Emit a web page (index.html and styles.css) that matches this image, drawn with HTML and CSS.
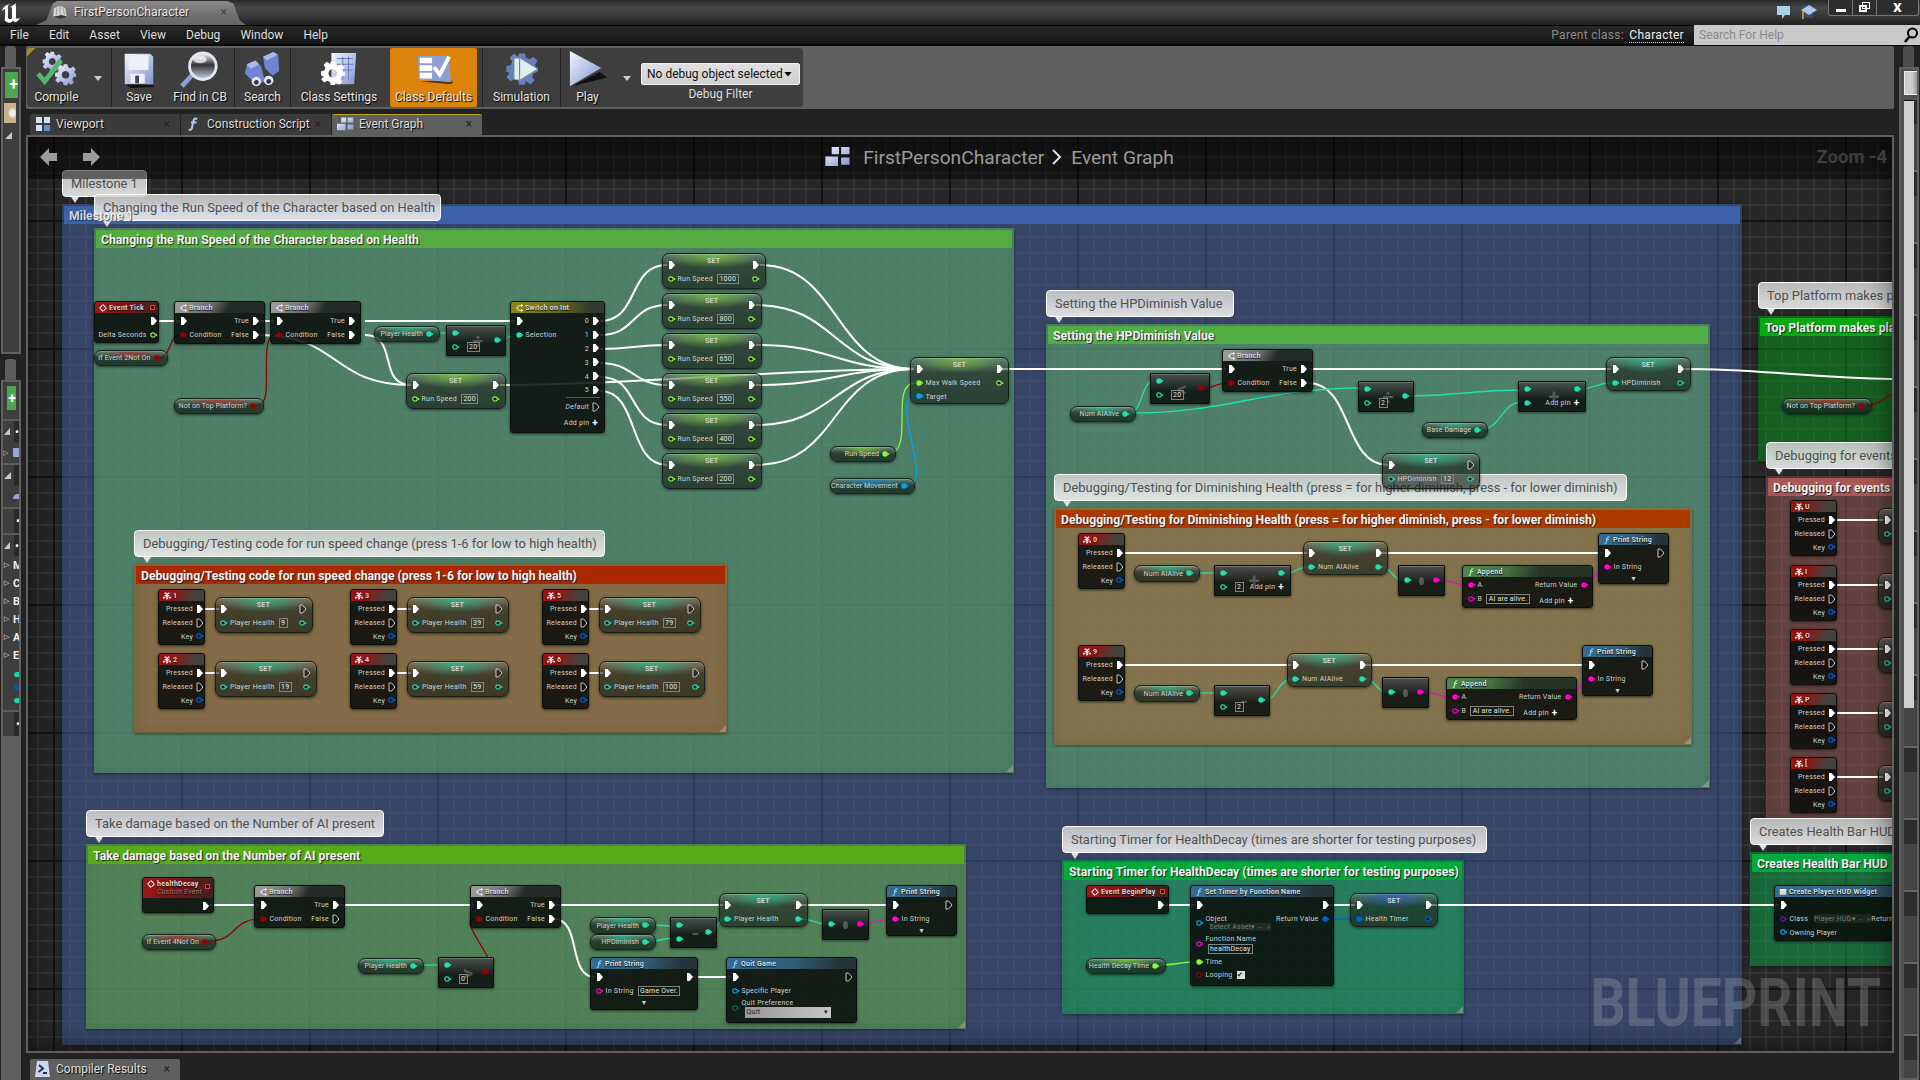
FILE: index.html
```html
<!DOCTYPE html>
<html lang="en">
<head>
<meta charset="utf-8">
<title>FirstPersonCharacter</title>
<link rel="stylesheet" href="styles.css">
</head>
<body>
<svg width="0" height="0" class="defs">
  <defs>
    <linearGradient id="steel" x1="0" y1="0" x2="1" y2="1"><stop offset="0" stop-color="#f4f7ff"/><stop offset="1" stop-color="#7f93cf"/></linearGradient>
    <linearGradient id="lens" x1="0" y1="0" x2="0" y2="1"><stop offset="0" stop-color="#fff"/><stop offset=".45" stop-color="#333"/><stop offset="1" stop-color="#cfd6e8"/></linearGradient>
    <symbol id="gear" viewBox="-12 -12 24 24"><path fill-rule="evenodd" d="M-2-11h4l.7 3 2.6 1.1 2.7-1.7 2.8 2.8-1.7 2.7L10.200-.5l1-1.500v4l-3 .7-1.100 2.600 1.700 2.700-2.800 2.800-2.700-1.700L2.700 8.200 2 11h-4l-.7-3-2.600-1.100-2.700 1.700-2.800-2.800 1.700-2.700L-8.200 2.700-11 2v-4l3-.7 1.100-2.600-1.700-2.700 2.800-2.800 2.700 1.700L-2.700-8.200zM0-4a4 4 0 1 0 .01 0z"/></symbol>
    <symbol id="ex" viewBox="0 0 9 10"><path d="M2 1h2.500L8 5 4.500 9H2z"/></symbol>
    <symbol id="dot" viewBox="0 0 9 10"><circle cx="4" cy="5" r="2.700"/><path d="M6.300 3.300 8.600 5 6.300 6.700z"/></symbol>
    <symbol id="ring" viewBox="0 0 9 10"><circle cx="4" cy="5" r="2.200" fill="#0a1210" stroke="currentColor" stroke-width="1.200"/><path d="M6.700 3.600 8.700 5 6.700 6.400z"/></symbol>
    <symbol id="event" viewBox="0 0 10 10"><path d="M5 .8 9.200 5 5 9.200.8 5z" fill="none" stroke="#fff" stroke-width="1.300" stroke-dasharray="4.800 1.100"/></symbol>
    <symbol id="branch" viewBox="0 0 10 10"><path d="M9 2H6C2 2 2 8 6 8h3M1 5h2M7.500.7 9.500 2 7.500 3.300M7.500 6.700 9.500 8 7.500 9.300" fill="none" stroke="#fff" stroke-width="1.100"/></symbol>
    <symbol id="key" viewBox="0 0 10 10"><path d="M2 .5h2v1h2v-1h2v2H6.500v1.200H8V5H6.300v1H10v2H8V7H6v2.500H4V7H2v1H0V6h3.700V5H2V3.700h1.500V2.500H2z" fill="#f3e6e6"/></symbol>
    <symbol id="func" viewBox="0 0 10 10"><path d="M8 1.500C6.500.5 5.700 1 5.300 3L4.200 8C4 9.300 3 9.300 2 8.800M3.500 4h4" fill="none" stroke="currentColor" stroke-width="1.400"/></symbol>
    <symbol id="widget" viewBox="0 0 10 10"><path d="M1 1.500h8v7H1z" fill="#dcd7c6"/><path d="M1 1.500h8V3H1z" fill="#fff"/></symbol>
    <symbol id="blocks" viewBox="0 0 24 20"><g fill="url(#steel)"><path d="M6 0h7v7H6zM15 0h8v7h-8zM0 9h12v9H0zM15 10h8v7h-8z"/></g></symbol>
  </defs>
</svg>

<header class="titlebar">
  <svg class="logo" viewBox="0 0 24 22"><path d="M2 9C3 5 6 3 10 2 7 4 8 5 8 7v9c2 2 3 1 4 0V7c0-2-1-2-2-2 2-1 4-2 6-4-1 2 0 3 0 4v11c1 1 2 1 4-.5-1 3-3 4-5 5l-2-2c-1 2-3 2.500-5 2-3-1-4-2-3-5V8c0-2-1-1-3 1z" fill="#fff"/></svg>
  <div class="doc-tab">
    <svg viewBox="0 0 24 22"><path d="M10 14 3 17l10 3 9-3z" fill="#333"/><path d="M4 6l6-3 2 1 2-1 5 3 2 11-7-2-4 1-7 1z" fill="#d5d5d5"/><path d="M12 4v11M8 5 7 15M16 5l2 10" stroke="#777" stroke-width=".8"/></svg>
    <span>FirstPersonCharacter</span><i>×</i>
  </div>
  <div class="window-tools">
    <svg width="16" height="16" viewBox="0 0 16 16"><path d="M1 2h13v9H9l-3 4v-4H1z" fill="#a9d3e6"/></svg>
    <svg width="18" height="16" viewBox="0 0 18 16"><path d="M5 8v6h8V8z" fill="#37496c"/><path d="M1 6l8-5 8 5-8 5z" fill="#a9c6ee"/><path d="M3 7v8" stroke="#e0a94b" stroke-width="1.500"/></svg>
    <div class="window-buttons"><b><u class="min"></u></b><b><u class="max"></u><u class="max back"></u></b><b class="close">X</b></div>
  </div>
</header>

<nav class="menubar">
  <span>File</span><span>Edit</span><span>Asset</span><span>View</span><span>Debug</span><span>Window</span><span>Help</span>
  <div class="parent">Parent class: <a>Character</a></div>
  <div class="search">Search For Help<svg width="14" height="16" viewBox="0 0 14 16"><circle cx="8.500" cy="6" r="4.500" fill="none" stroke="#000" stroke-width="2"/><path d="M5.500 9.500 1 15" stroke="#000" stroke-width="2.500"/></svg></div>
</nav>

<main class="workspace">
  <aside class="dock-left">
    <div class="stub"></div>
    <section class="dock-panel components"><div class="add">+</div><div class="thumb"></div><em class="fold"></em></section>
    <div class="stub lower"></div>
    <section class="dock-panel blueprint">
      <div class="add small">+</div>
      <div class="head"><em class="fold"></em>•</div>
      <div class="item"><s>▷</s><u class="chip"></u></div>
      <div class="head"><em class="fold"></em></div>
      <div class="item"><s></s><u class="chip curve"></u></div>
      <div class="head dot">•</div>
      <div class="head"><em class="fold"></em>•</div>
      <div class="entry"><s>▷</s>M</div><div class="entry"><s>▷</s>C</div><div class="entry"><s>▷</s>B</div><div class="entry"><s>▷</s>H</div><div class="entry"><s>▷</s>A</div><div class="entry"><s>▷</s>E</div>
      <div class="pill"></div><div class="pill blue"></div><div class="pill"></div>
      <div class="head dot">•</div>
      <div class="rest"></div>
    </section>
  </aside>

  <div class="center">
    <div class="toolbar">
      <div class="tools">
        <div class="tool compile"><svg viewBox="0 0 44 40"><use href="#gear" x="6" y="0" width="22" height="22" fill="url(#steel)"/><use href="#gear" x="19" y="13" width="24" height="24" fill="url(#steel)"/><path d="M2 24l7 8L26 10" fill="none" stroke="#52b96a" stroke-width="5"/></svg><span>Compile</span></div>
        <div class="caret"></div>
        <div class="tool save"><svg viewBox="0 0 44 40"><path d="M6 33l30 3 3 2-26 1z" fill="#111"/><path d="M7 3h27l3 3v29H7z" fill="url(#steel)"/><path d="M11 4h21v16H11zM13 24h15v10H13z" fill="#eef0f8"/><path d="M18 26h4v8h-4z" fill="#3b466e"/></svg><span>Save</span></div>
        <div class="tool find"><svg viewBox="0 0 44 40"><path d="M14 25 3 37" stroke="#8ba0dc" stroke-width="5"/><circle cx="25" cy="16" r="14" fill="url(#lens)" stroke="#e3e8f6" stroke-width="3"/><ellipse cx="22" cy="9" rx="7" ry="4" fill="#fff" opacity=".7"/></svg><span>Find in CB</span></div>
        <div class="tool look"><svg viewBox="0 0 44 40"><path d="M5 14l9-4 6 6 4 16-9 3L3 24zM22 6l11-5 5 3 1 17-7 5-8-8z" fill="#6d86cf"/><path d="M5 14l9-4 4 4-9 5zM22 6l11-5 4 3-11 6z" fill="#a9b9e8"/><circle cx="15" cy="32" r="5" fill="#dfe5f7"/><circle cx="28" cy="31" r="5" fill="#dfe5f7"/><circle cx="15" cy="33" r="2.500" fill="#334"/><circle cx="28" cy="32" r="2.500" fill="#334"/></svg><span>Search</span></div>
        <div class="tool settings"><svg viewBox="0 0 44 40"><path d="M14 2h26l-2 33H14z" fill="url(#steel)"/><path d="M20 8h17M20 14h17M20 20h16M26 6v24M32 6v24" stroke="#6379b6"/><use href="#gear" x="2" y="10" width="27" height="27" fill="#fff"/></svg><span>Class Settings</span></div>
        <div class="tool defaults"><svg viewBox="0 0 44 40"><path d="M8 32l32 3 2-2-4-3z" fill="#5a3500"/><path d="M5 5h32l3 28-34-3z" fill="#8da0d6"/><path d="M7 7h13v6H7zM7 15h13v6H7zM7 23h13v6H7z" fill="#fff"/><path d="M22 17l6 8L38 6" fill="none" stroke="#fff" stroke-width="4"/></svg><span>Class Defaults</span></div>
        <div class="tool simulation"><svg viewBox="0 0 44 40"><use href="#gear" x="3" y="1" width="38" height="36" fill="#6a80ba"/><circle cx="22" cy="19" r="8" fill="#566aa0"/><path d="M14 8h5v22h-5zM20 8l18 11-18 11z" fill="#dff0ec"/></svg><span>Simulation</span></div>
        <div class="tool play"><svg viewBox="0 0 44 40"><path d="M5 37l37-9-8-6z" fill="#111"/><path d="M3 0 36 18 3 37z" fill="url(#steel)"/></svg><span>Play</span></div>
        <div class="caret"></div>
        <div class="filter"><div class="select">No debug object selected<em></em></div><span>Debug Filter</span></div>
      </div>
    </div>

    <div class="tabs">
      <div class="tab"><svg width="16" height="16" viewBox="0 0 16 16"><path d="M1 1h6v6H1zM9 1h6v6H9zM1 9h6v6H1z" fill="#cfe3f7"/><path d="M9 9h6v6H9z" fill="#5f8fd0"/></svg><span>Viewport</span><i>×</i></div>
      <div class="tab"><svg width="14" height="18" viewBox="0 0 10 10"><use href="#func" color="#b9c8f2"/></svg><span>Construction Script</span><i>×</i></div>
      <div class="tab active"><svg width="17" height="15"><use href="#blocks" width="17" height="15"/></svg><span>Event Graph</span><i>×</i></div>
    </div>

    <div class="graph">
      <div class="canvas" id="canvas"></div>
      <div class="vignette"></div>
      <div class="watermark">BLUEPRINT</div>
      <div class="graph-bar">
        <div class="history"><svg width="18" height="20" viewBox="0 0 18 20"><path d="M17 6v8H9v5L0 10 9 1v5z" fill="#9b9b9b"/></svg><svg width="18" height="20" viewBox="0 0 18 20"><path d="M1 6v8h8v5l9-9-9-9v5z" fill="#9b9b9b"/></svg></div>
        <div class="crumbs"><svg width="26" height="21"><use href="#blocks" width="26" height="21"/></svg><span>FirstPersonCharacter</span><svg width="10" height="16" viewBox="0 0 10 16"><path d="M1 1l7 7-7 7" fill="none" stroke="#ddd" stroke-width="2"/></svg><span>Event Graph</span></div>
        <div class="zoom">Zoom -4</div>
      </div>
    </div>

    <div class="tabs bottom">
      <div class="tab active"><svg width="15" height="16" viewBox="0 0 15 16"><path d="M2 0h11l2 16H0z" fill="#c8d8f2"/><path d="M4 4l4 3.500L3.500 11M8 12h4" fill="none" stroke="#234" stroke-width="2"/></svg><span>Compiler Results</span><i>×</i></div>
    </div>
  </div>

  <aside class="dock-right">
    <div class="stub"></div>
    <section class="dock-panel details"><div class="grid-button"></div><div class="detail-track"><div class="scroller"></div></div></section>
  </aside>
</main>
<script src="graph.js"></script>
</body>
</html>
```
FILE: styles.css
```css
* { box-sizing: border-box; }
body { margin: 0; width: 1920px; height: 1080px; overflow: hidden; display: flex; flex-direction: column; background: #222; color: #ddd; font: 12px Roboto, "Liberation Sans", sans-serif; }
.defs { position: absolute; }
i, em, u, s { font-style: normal; text-decoration: none; }
span { white-space: nowrap; }

.titlebar { height: 25px; flex: none; display: flex; align-items: flex-start; background: linear-gradient(#292929, #474747 30%, #3d3d3d 55%, #202020); }
.logo { width: 24px; height: 22px; margin: 2px 12px 0 0; }
.doc-tab { width: 210px; height: 24px; margin-top: 1px; padding: 0 14px 2px 15px; display: flex; align-items: center; background: linear-gradient(#8b8b8b, #6f6f6f 60%, #666); clip-path: polygon(0 100%, 5% 80%, 8% 10%, 10% 0, 91% 0, 94% 10%, 97% 80%, 100% 100%); color: #e8e8e8; text-shadow: 1px 1px 1px #222; letter-spacing: .1px; }
.doc-tab svg { width: 18px; height: 18px; margin-right: 5px; }
.doc-tab i { margin-left: auto; padding-right: 5px; color: #444; text-shadow: none; }
.window-tools { margin-left: auto; display: flex; gap: 8px; padding-right: 1px; }
.window-tools > svg { margin-top: 4px; }
.window-buttons { display: flex; width: 91px; height: 16px; margin-left: 2px; border: 1px solid #777; border-top: 0; border-radius: 0 0 3px 3px; background: #2d2d2d; }
.window-buttons b { position: relative; width: 24px; height: 15px; border-right: 1px solid #777; text-align: center; color: #fff; font-size: 13px; line-height: 15px; }
.window-buttons .close { flex: 1; border: 0; font-weight: 900; }
.min { display: block; width: 10px; height: 3px; margin: 9px auto 0; background: #fff; }
.max { position: absolute; left: 6px; top: 5px; width: 8px; height: 7px; border: 2px solid #fff; }
.max.back { left: 9px; top: 2px; border-width: 1px; }

.menubar { height: 21px; flex: none; display: flex; align-items: center; border-top: 1px solid #050505; border-bottom: 2px solid #090909; background: linear-gradient(#282828, #151515); padding-left: 10px; color: #ddd; }
.menubar > span { margin-right: 20.100px; }
.parent { margin-left: auto; color: #8a8a8a; letter-spacing: .3px; }
.parent a { color: #eee; border-bottom: 1px dotted #ddd; margin-left: 2px; }
.search { width: 226px; height: 20px; margin-left: 10px; padding: 0 2px 0 5px; display: flex; align-items: center; justify-content: space-between; background: #c9c9c9; color: #8b8b8b; }

.workspace { flex: 1; min-height: 0; display: grid; grid-template-columns: 26px 1868px 26px; }
.dock-left, .dock-right { display: flex; flex-direction: column; min-height: 0; }
.dock-left { padding-left: 1px; }
.stub { width: 11px; height: 21px; margin-left: 4px; background: #5c5c5c; border-radius: 3px 3px 0 0; }
.stub.lower { margin-top: 5px; }
.dock-panel { width: 20px; border: 2px solid #606060; background: #3e3e3e; overflow: hidden; }
.components { height: 287px; padding: 3px 2px; }
.add { width: 13px; height: 26px; background: #4ca54f; color: #fff; font: bold 16px/26px Roboto; text-align: right; overflow: hidden; }
.add.small { width: 9px; height: 24px; margin: 4px 0 9px 4px; font-size: 14px; line-height: 24px; }
.thumb { width: 12px; height: 20px; margin: 5px 0 9px -1px; background: radial-gradient(ellipse at 70% 50%, #eee 0 20%, #cbb08b 40%); }
.fold { display: block; width: 7px; height: 7px; background: #c8c8c8; clip-path: polygon(100% 0, 100% 100%, 0 100%); }
.blueprint { flex: 1; border-bottom: 0; }
.head { height: 23px; padding: 0 0 0 1px; border-top: 2px solid #5c5c5c; display: flex; align-items: center; gap: 5px; color: #fff; background: linear-gradient(90deg, #3e3e3e 70%, #2a2a2a 70%); }
.head.dot { height: 26px; padding-left: 13px; }
.item { height: 21px; display: flex; align-items: center; gap: 2px; font-size: 8px; }
.item s, .entry s { width: 8px; flex: none; font-size: 7px; font-weight: 400; }
.chip { width: 7px; height: 9px; background: #98a5d8; }
.chip.curve { height: 5px; border-radius: 5px 0 0 0; }
.entry { height: 18px; display: flex; align-items: center; gap: 1px; font-weight: 700; font-size: 11px; padding-left: 1px; color: #eee; }
.pill { width: 7px; height: 5px; margin: 8px 0 7px 11px; border-radius: 4px 0 0 4px; background: #1ed6a5; }
.pill.blue { background: #0b50c8; }
.rest { height: 400px; background: #606060; }
.dock-right { padding-left: 5px; }
.dock-right .stub { background: #4c4c4c; }
.details { flex: 1; padding: 2px 0 0 3px; background: #505050; }
.grid-button { width: 14px; height: 24px; border: 1px solid #eee; background: linear-gradient(90deg, #ccc 60%, #999); }
.detail-track { width: 13px; height: 980px; margin-top: 5px; background: repeating-linear-gradient(#2c2c2c 0 24px, #444 24px 70px, #666 70px 72px); }
.scroller { width: 10px; height: 608px; background: #cfcfcf; border-top: 1px solid #111; }

.center { display: flex; flex-direction: column; min-width: 0; }
.toolbar { height: 63px; padding: 2px 1px; background: #606060; border-radius: 2px; }
.tools { width: 776px; height: 59px; display: flex; background: linear-gradient(135deg, #a58a2a 0 6px, #3e3e3e 6px); border-radius: 3px; }
.tool { display: flex; flex: none; flex-direction: column; align-items: center; height: 59px; text-shadow: 1px 1px 1px #000; color: #e4e4e4; border-left: 1px solid #232323; }
.tool svg { width: 44px; height: 38px; margin-top: 3px; }
.tool span { margin-top: 1px; }
.compile { width: 60px; border: 0; padding-right: 1px; }
.save { width: 55px; } .find { width: 68px; border: 0; } .look { width: 56px; } .settings { width: 100px; padding-right: 3px; } .play { width: 56px; padding-right: 2px; }
.defaults { width: 87px; background: #dc830c; border-radius: 2px; border: 0; }
.simulation { width: 78px; margin-left: 5px; }
.caret { width: 24px; flex: none; padding: 28px 0 0 7px; }
.caret::before { content: ""; display: block; width: 8px; height: 5px; background: #ccc; clip-path: polygon(0 0, 100% 0, 50% 100%); }
.filter { margin-left: auto; padding: 15px 3px 0 0; width: 162px; text-align: center; }
.select { height: 22px; display: flex; align-items: center; justify-content: space-between; padding: 0 7px 0 5px; margin-bottom: 2px; border: 1px solid #eee; background: linear-gradient(#e0e0e0, #cfcfcf); color: #111; white-space: nowrap; border-radius: 2px; }
.select em { width: 8px; height: 5px; background: #000; clip-path: polygon(0 0, 100% 0, 50% 100%); }

.tabs { height: 26px; flex: none; padding: 5px 0 0 4px; display: flex; gap: 1px; }
.tab { width: 150px; height: 21px; padding: 0 10px 2px 5px; display: flex; align-items: center; background: #3b3b3b; border-radius: 2px 2px 0 0; text-shadow: 1px 1px 1px #000; }
.tab svg { margin-right: 5px; flex: none; }
.tab:nth-child(2) svg { margin-right: 7px; }
.tab i { margin-left: auto; color: #222; text-shadow: none; }
.tab.active { background: #5f5f5f; }
.tabs:not(.bottom) .active { border-top: 1px solid #c0a326; }
.bottom { height: 27px; padding-top: 6px; }
.bottom .tab svg { margin-right: 6px; }

.graph { position: relative; flex: 1; overflow: hidden; border: 2px solid #606060; background-color: #262626;
  background-image: linear-gradient(90deg, #141414 2px, transparent 2px), linear-gradient(#141414 2px, transparent 2px), linear-gradient(90deg, #333 2px, transparent 2px), linear-gradient(#333 2px, transparent 2px);
  background-size: 128px 128px, 128px 128px, 16px 16px, 16px 16px;
  background-position: 25px 0, 0 83px, 9px 0, 0 3px; }
.canvas { position: absolute; left: -28px; top: -137px; width: 1920px; height: 1080px; }
.vignette { position: absolute; inset: 0; box-shadow: inset 0 0 28px rgba(0, 0, 0, .55); }
.watermark { position: absolute; right: 11px; bottom: 9px; font: bold 66px/76px Roboto, sans-serif; color: rgba(190, 190, 190, .25); transform: scaleX(.835); transform-origin: right; }
.graph-bar { position: absolute; inset: 0 0 auto 0; height: 42px; padding: 0 5px 2px 12px; display: grid; grid-template-columns: 1fr auto 1fr; align-items: center; background: rgba(0, 0, 0, .5); color: #9b9b9b; font-size: 19.200px; }
.history { display: flex; gap: 24px; }
.crumbs { display: flex; align-items: center; margin-left: 72px; }
.crumbs svg:first-child { margin-right: 12px; }
.crumbs svg:nth-child(3) { margin: 0 9px 0 8px; }
.zoom { text-align: right; color: #3d3d3d; font-weight: 700; font-size: 18.500px; }

.comment, .bubble, .node { position: absolute; }
.comment { padding: 2px; box-shadow: inset 0 0 16px rgba(0, 0, 0, .1), 0 1px 3px rgba(0, 0, 0, .4); }
.comment h2, .over-title { margin: 0; height: 18px; padding-left: 5px; font: bold 12.200px/20px Roboto, sans-serif; color: #f0f0f0; text-shadow: 1px 1px 1px #222; white-space: nowrap; overflow: hidden; }
.over-title { position: absolute; opacity: .8; }
.comment::after { content: ""; position: absolute; right: 1px; bottom: 1px; width: 7px; height: 7px; background: repeating-linear-gradient(135deg, #aaa8 0 1px, #ddd5 1px 2px); clip-path: polygon(100% 0, 100% 100%, 0 100%); }
.bubble { height: 27px; padding-left: 8px; border: 1px solid #fff; border-radius: 4px; background: linear-gradient(rgba(212, 212, 212, .84), rgba(242, 242, 242, .88)); color: #505050; font-size: 12.900px; line-height: 26px; white-space: nowrap; }
.bubble::after { content: ""; position: absolute; left: 8px; top: 26px; width: 8px; height: 6px; background: #ddd; clip-path: polygon(0 0, 100% 0, 50% 100%); }
.wires { position: absolute; inset: 0; }

.node { display: flex; flex-direction: column; border: 1px solid #0b0f0d; border-radius: 3px; background: rgba(10, 14, 12, .87); box-shadow: 0 1px 3px rgba(0, 0, 0, .6), inset 0 1px 0 rgba(255, 255, 255, .2); color: #cdd2cf; font-size: 7px; letter-spacing: .25px; }
.node header { flex: none; height: 11px; padding-left: 4px; display: flex; align-items: center; gap: 2px; border-radius: 2px 2px 0 0; font-weight: 700; color: #dedede; white-space: nowrap; text-shadow: 0 1px 1px #000; }
.node header svg { width: 8px; height: 8px; flex: none; color: #8fd0ff; }
.node header small { display: block; font: italic 400 7px/7px Roboto; color: #b07a63; }
.node header mark { width: 5px; height: 5px; margin: 0 3px 0 auto; background: #200; border: 1px solid #ff3535; }
.red header { background: linear-gradient(100deg, #9a1a1a, #771616 50%, #3b2421); }
.key header { background: linear-gradient(115deg, #8e1616 35%, #46413d 75%); }
.gray header { background: linear-gradient(115deg, #999 5%, #6d6f6e 40%, #252b28 60%); }
.yellow header { background: linear-gradient(100deg, #8c8a15, #6c6b1a 50%, #303a30 85%); }
.blue header { background: linear-gradient(110deg, #356e94, #315d78 50%, #26343a 85%); }
.green header { background: linear-gradient(110deg, #4e8a4d, #446f41 35%, #26342a 60%); }
.green header svg { color: #b5efae; }
.custom header { height: 20px; align-items: flex-start; padding-top: 2px; line-height: 9px; }
.custom header mark { margin-top: 4px; }
.body { display: flex; justify-content: space-between; padding-top: 1px; flex: 1; }
.side { display: flex; flex-direction: column; padding-left: 3.500px; }
.side.out { align-items: flex-end; padding: 0 3.500px 0 0; }
.row { height: 13.800px; flex: none; display: flex; align-items: center; gap: 2px; white-space: nowrap; }
.row > svg { width: 9px; height: 10px; flex: none; color: #fff; fill: currentColor; }
.row > svg.hollow { fill: #0005; stroke: #ddd; stroke-width: .9; }
.row > span, .row > em { padding-top: 1px; }
.row > em { font-style: italic; }
.out .row { flex-direction: row-reverse; }
.row .box { border: 1px solid #7f8682; padding: 0 1.500px; height: 10px; line-height: 8.500px; margin: 1px 0 0 2px; letter-spacing: .2px; color: #e2e6e4; }
.tall { height: 21.500px; }
.stack { display: flex; flex-direction: column; align-items: flex-start; line-height: 8px; }
.ghost { color: #77807b; margin-left: 4px; background: #ffffff10; }
.combo { width: 86px; height: 11px; line-height: 11px; margin-left: 3px; padding-left: 2px; display: flex; justify-content: space-between; color: #222; background: linear-gradient(90deg, #999, #c5c5c5); }
.row > .check { width: 8px; height: 8px; padding: 0; background: #ddd; color: #111; line-height: 8px; margin-left: 3px; }
.more { text-align: center; height: 11px; line-height: 10px; font-size: 7px; }
.plus { color: #fff; font: bold 10px/8px Roboto; margin: 0 2px 0 1px; }
.rule { border-top: 1px solid #555; }

.set { border-radius: 7px; border-color: #16211b; background: radial-gradient(ellipse 45% 14px at 50% 1px, var(--glow), transparent), linear-gradient(rgba(120, 130, 120, .5), rgba(30, 36, 30, .62) 35%, rgba(18, 26, 20, .62)); }
.set .cap { position: absolute; inset: 3px 0 auto 0; text-align: center; font-weight: 700; font-size: 7px; line-height: 9px; }
.set .body { padding-top: 4px; }
.set .out { padding-right: 4.500px; }
.var { border-radius: 7px; border-color: #17231c; justify-content: center; letter-spacing: .1px; background: radial-gradient(ellipse 40% 9px at 50% 1px, var(--glow), transparent), linear-gradient(rgba(130, 140, 130, .6), rgba(28, 44, 36, .75) 45%, rgba(20, 32, 26, .75)); }
.var .body { padding: 0; align-items: center; justify-content: flex-end; }
.var .out { padding-right: 5px; }
.math { border-radius: 1px; background: linear-gradient(rgba(70, 74, 72, .9), rgba(14, 20, 17, .9) 60%); }
.math .cap { position: absolute; left: 0; right: 0; top: 4px; padding-left: 4px; text-align: center; color: #8e928f77; font: bold 20px/22px Roboto; }
.math .cap.conv { top: 11px; left: 20px; right: auto; width: 5px; height: 8px; padding: 0; border-radius: 50%; background: #555a57; }
.math .body { padding-top: 0; }
.math .side { min-width: 12px; }
.math .mid, .conv + .body .side { justify-content: center; }
.math .row .box { margin-left: 5px; }
```
FILE: graph.js
```js
const T = '#1fe0ae', L = '#8ff53a', R = '#960000', P = '#ff00d0', B = '#0060e0', O = '#04a4f2', V = '#6a14c8', D = '#0b6457';
const glow = { [T]: 'rgba(40,190,145,.75)', [L]: 'rgba(125,200,60,.75)', [R]: 'rgba(190,40,40,.65)', [B]: 'rgba(40,90,210,.7)', [O]: 'rgba(30,130,200,.8)' };
const out = [];
const at = (x, y, w, h) => `left:${x}px;top:${y}px;width:${w}px;height:${h}px`;

/* pins */
const use = (id, c, k = '') => `<svg class="${k}" style="color:${c}"><use href="#${id}" width="9" height="10"/></svg>`;
const row = (s, k = '') => `<div class="row ${k}">${s}</div>`;
const lab = (t) => t ? `<span>${t}</span>` : '';
const e = (t) => row(use('ex', '#fff') + lab(t));
const E = (t) => row(use('ex', '#fff', 'hollow') + lab(t));
const f = (c, t) => row(use('dot', c) + lab(t));
const o = (c, t, b) => row(use('ring', c) + lab(t) + (b ? `<span class="box">${b}</span>` : ''));
const add = '<div class="row"><b class="plus">+</b><span>Add pin</span></div>';

/* node kinds */
const node = (k, x, y, w, h, head, l, r, extra = '', mid = '') =>
  out.push(`<div class="node ${k}" style="${at(x, y, w, h)}${mid}">${head}<div class="body"><div class="side">${l.join('')}</div><div class="side out ${k === 'math mid' ? 'mid' : ''}">${r.join('')}</div></div>${extra}</div>`);
const hd = (icon, t, m = '') => `<header><svg><use href="#${icon}" width="8" height="8"/></svg><span>${t}</span>${m}</header>`;
const branch = (x, y, open) => node('gray', x, y, 90.500, 43, hd('branch', 'Branch'), [e(), f(R, 'Condition')], [e('True'), open ? E('False') : e('False')]);
const key = (x, y, t) => node('key', x, y, 46.500, 56, hd('key', t), [], [e('Pressed'), E('Released'), o(B, 'Key')]);
const set = (x, y, w, h, c, l, r) => node('set', x, y, w, h, '<div class="cap">SET</div>', l, r, '', `;--glow:${glow[c]}`);
const vari = (x, y, w, c, t) => node('var', x, y, w, 16.500, '', [], [f(c, t)], '', `;--glow:${glow[c]}`);
const math = (x, y, w, s, l, r, mid = true) => node(mid ? 'math mid' : 'math', x, y, w, 31, `<div class="cap">${s}</div>`, l, r);
const convert = (x, y) => node('math', x, y, 47, 31, '<div class="cap conv"></div>', [f(T)], [f(P)]);
const fn = (k, x, y, w, h, t, l, r, more) => node(k, x, y, w, h, hd('func', t), l, r, more ? '<div class="more">▼</div>' : '');

const comment = (x, y, w, h, t, c, bg) => out.push(`<div class="comment" style="${at(x, y, w, h)};background:${bg}"><h2 style="background:${c}">${t}</h2></div>`);
const bubble = (x, y, w, t) => out.push(`<div class="bubble" style="left:${x}px;top:${y}px;width:${w}px">${t}</div>`);

const damage = 'Take damage based on the Number of AI present';
const run = 'Changing the Run Speed of the Character based on Health';
const dbgRun = 'Debugging/Testing code for run speed change (press 1-6 for low to high health)';
const dim = 'Debugging/Testing for Diminishing Health (press = for higher diminish, press - for lower diminish)';
const timer = 'Starting Timer for HealthDecay (times are shorter for testing purposes)';
comment(62, 204, 1680, 841, '', '#3d60ab', 'rgba(70,100,165,.5)');
comment(94, 228, 920, 545, run, '#54ab41', 'rgba(100,185,103,.5)');
comment(134, 564, 593, 169, dbgRun, '#ab2900', 'rgba(183,87,38,.5)');
comment(1046, 324, 664, 464, 'Setting the HPDiminish Value', '#52ad45', 'rgba(100,185,108,.5)');
comment(1054, 508, 638, 237, dim, '#ad3a00', 'rgba(183,103,48,.5)');
comment(86, 844, 880, 185, damage, '#57ab17', 'rgba(106,187,73,.5)');
comment(1062, 860, 402, 154, timer, '#02ab39', 'rgba(22,181,83,.5)');
comment(1758, 316, 300, 145, 'Top Platform makes player', '#07ab11', 'rgba(6,152,28,.5)');
comment(1766, 476, 300, 343, 'Debugging for events', '#a95855', 'rgba(158,92,86,.5)');
comment(1750, 852, 300, 114, 'Creates Health Bar HUD', '#04a83f', 'rgba(12,172,78,.5)');
bubble(62, 170, 85, 'Milestone 1');
bubble(94, 194, 347, run);
out.push(`<h2 class="over-title" style="left:64px;top:206px">Milestone 1</h2>`);
bubble(134, 530, 471, dbgRun);
bubble(1046, 290, 188, 'Setting the HPDiminish Value');
bubble(1054, 474, 573, dim);
bubble(86, 810, 298, damage);
bubble(1062, 826, 425, timer);
bubble(1758, 282, 300, 'Top Platform makes player');
bubble(1766, 442, 300, 'Debugging for events');
bubble(1750, 818, 300, 'Creates Health Bar HUD');

/* wires: x1, y1, x2, y2, colour, handle length */
const W = '#fff';
const wires = [
  [154, 321, 179, 321, W], [260, 321, 274, 321, W], [365, 321, 515, 321, W], [260, 335, 411, 385, W, 80], [365, 335, 411, 385, W, 34],
  [161, 357, 179, 335, R], [258, 405, 275, 335, R, 18], [433, 333, 451, 333, T], [499, 340, 516, 335, T],
  [600, 321, 667, 265, W, 40], [600, 335, 667, 305, W, 36], [600, 349, 667, 345, W], [600, 363, 667, 385, W], [600, 377, 667, 425, W, 40], [600, 391, 667, 465, W, 40],
  [500, 385, 914, 369, W, 140],
  [760, 265, 914, 369, W, 80], [756, 305, 914, 369, W, 80], [756, 345, 914, 369, W], [756, 385, 914, 369, W], [756, 425, 914, 369, W, 80], [756, 465, 914, 369, W, 85],
  [889, 453, 915, 383, L, 26], [908, 485, 915, 396, O, 26],
  [200, 609, 219, 609, W], [392, 609, 411, 609, W], [584, 609, 603, 609, W], [200, 673, 219, 673, W], [392, 673, 411, 673, W], [584, 673, 603, 673, W],
  [1003, 369, 1226, 369, W], [1309, 369, 1611, 369, W], [1308, 383, 1388, 465, W, 45], [1685, 369, 1900, 379, W, 80],
  [1129, 413, 1155, 380, T, 14], [1129, 413, 1363, 388, T, 100], [1204, 388, 1227, 383, R], [1408, 396, 1522, 390, T], [1481, 429, 1522, 402, T], [1580, 389, 1611, 383, T],
  [1120, 553, 1307, 553, W], [1382, 553, 1603, 553, W], [1193, 573, 1219, 573, T], [1286, 573, 1308, 567, T], [1381, 567, 1403, 580, T], [1439, 580, 1467, 585, P], [1587, 585, 1603, 567, P],
  [1120, 665, 1291, 665, W], [1366, 665, 1587, 665, W], [1193, 693, 1219, 693, T], [1264, 700, 1292, 679, T], [1365, 679, 1387, 692, T], [1423, 692, 1451, 697, P], [1571, 697, 1587, 679, P],
  [209, 905, 259, 905, W], [339, 905, 474, 905, W], [554, 905, 723, 905, W], [554, 919, 595, 977, W, 28], [209, 941, 260, 919, R, 28], [417, 965, 443, 965, T], [488, 972, 474, 919, R, 18],
  [650, 925, 675, 926, T], [650, 941, 675, 938, T], [711, 932, 724, 919, T], [801, 905, 891, 905, W], [801, 919, 827, 924, T], [863, 924, 891, 919, P], [693, 977, 731, 977, W],
  [1164, 905, 1195, 905, W], [1329, 905, 1355, 905, W], [1432, 905, 1779, 905, W], [1329, 919, 1355, 919, B], [1160, 965, 1195, 962, L],
  [1866, 405, 1900, 394, R], [1830, 520, 1883, 520, W], [1830, 585, 1883, 585, W], [1830, 649, 1883, 649, W], [1830, 713, 1883, 713, W], [1830, 777, 1883, 777, W],
];
out.push('<svg class="wires" width="1920" height="1080" fill="none">' + wires.map(([a, b, c, d, k, t = Math.abs(c - a) / 2]) =>
  `<path d="M${a} ${b}C${a + t} ${b} ${c - t} ${d} ${c} ${d}" stroke="${k}" stroke-width="${k === W ? 2 : 1.300}"/>`).join('') + '</svg>');

/* run speed */
const mark = '<mark></mark>';
node('red', 94, 301, 64.500, 42, hd('event', 'Event Tick', mark), [], [e(), o(L, 'Delta Seconds')]);
branch(174, 301); branch(270, 301);
vari(94, 349.500, 73.500, R, 'If Event 2Not On');
vari(174, 397.500, 90, R, 'Not on Top Platform?');
vari(374, 325.500, 66, T, 'Player Health');
math(446, 325, 60, '÷', [f(T), o(T, '', '20')], [f(T)]);
set(406, 373, 99.500, 36, L, [e(), o(L, 'Run Speed', '200')], [e(), o(L)]);
node('yellow', 510, 301, 94.500, 132, hd('branch', 'Switch on Int'), [e(), f(T, 'Selection')],
  [e('0'), e('1'), e('2'), e('3'), e('4'), e('5'), '<div class="row rule" style="height:19px"><svg class="hollow"><use href="#ex" width="9" height="10"/></svg><em>Default</em></div>', add]);
[1000, 800, 650, 550, 400, 200].forEach((v, i) => set(662, 253 + i * 40, v === 1000 ? 103.500 : 99.500, 36, L, [e(), o(L, 'Run Speed', v)], [e(), o(L)]));
set(910, 357, 99, 47, L, [e(), f(L, 'Max Walk Speed'), f(O, 'Target')], [e(), o(L)]);
vari(830, 445.500, 66, L, 'Run Speed');
vari(830, 477.500, 85, O, 'Character Movement');

/* number keys */
[[1, 158, 589, 9, 98], [3, 350, 589, 39, 102], [5, 542, 589, 79, 102], [2, 158, 653, 19, 102], [4, 350, 653, 59, 102], [6, 542, 653, 100, 106.500]].forEach(([k, x, y, v, w]) => {
  key(x, y, k);
  set(x + 56.500, y + 8, w, 36, T, [e(), o(T, 'Player Health', v)], [E(), o(T)]);
});

/* diminish value */
branch(1222, 349);
math(1150, 373, 60, '&lt;', [f(T), o(T, '', '20')], [f(R)]);
vari(1070, 405.500, 66, T, 'Num AIAlive');
math(1358, 381, 56, '÷', [f(T), o(T, '', '2')], [f(T)]);
math(1518, 381, 68, '+', [f(T), f(T)], [f(T), add], false);
vari(1422, 421.500, 66, T, 'Base Damage');
set(1606, 357, 84.500, 34, T, [e(), f(T, 'HPDiminish')], [e(), o(T)]);
set(1382, 453, 98, 36, T, [e(), o(T, 'HPDiminish', '12')], [E(), o(T)]);

const debugRow = (y, k, dx) => {
  key(1078, y, k);
  vari(1134, dx ? y + 40 : y + 32, 66, T, 'Num AIAlive');
  if (dx) math(1214, y + 40, 56, '-', [f(T), o(T, '', '2')], [f(T)]);
  else math(1214, y + 32, 76.500, '+', [f(T), o(T, '', '2')], [f(T), add], false);
  set(1302.500 - dx, y + 8, 85.500, 34, T, [e(), f(T, 'Num AIAlive')], [e(), f(T)]);
  convert(1398 - dx, y + 32);
  fn('green', 1462 - dx, y + 32, 131, 43, 'Append', [f(P, 'A'), o(P, 'B', 'AI are alive.')], [f(P, 'Return Value'), '<div class="row" style="padding-right:13px;height:18px"><b class="plus">+</b>Add pin</div>']);
  fn('blue', 1598 - dx, y, 71, 51, 'Print String', [e(), f(P, 'In String')], [E()], true);
};
debugRow(533, 0, 0);
debugRow(645, 9, 16);

/* take damage */
node('red custom', 142, 877, 72, 36, hd('event', 'healthDecay<small>Custom Event</small>', mark), [], [e()]);
branch(254, 885, true); branch(470, 885);
vari(142, 933.500, 74, R, 'If Event 4Not On');
vari(358, 957.500, 66, T, 'Player Health');
math(438, 957, 56, '&gt;', [f(T), o(T, '', '0')], [f(R)]);
vari(590, 917, 66, T, 'Player Health');
vari(590, 933.500, 66, T, 'HPDiminish');
math(670, 917, 47, '-', [f(T), f(T)], [f(T)]);
set(718.500, 893, 89.500, 34, T, [e(), f(T, 'Player Health')], [e(), f(T)]);
convert(822, 909);
fn('blue', 886, 885, 71, 51, 'Print String', [e(), f(P, 'In String')], [E()], true);
fn('blue', 590, 957, 108, 53, 'Print String', [e(), o(P, 'In String', 'Game Over.')], [e()], true);
fn('blue', 726, 957, 131, 66, 'Quit Game', [e(), o(O, 'Specific Player'), row(use('ring', D) + '<div class="stack">Quit Preference<div class="combo"><span>Quit</span><span>▾&nbsp;</span></div></div>', 'tall')], [E()]);

/* timer */
node('red', 1086, 885, 83, 29, hd('event', 'Event BeginPlay', mark), [], [e()]);
vari(1086, 957.500, 80, L, 'Health Decay Time');
fn('blue', 1190, 885, 144, 101, 'Set Timer by Function Name', [e(),
  row(use('ring', O) + '<div class="stack">Object<span class="ghost">Select Asset▾ ← ⌕</span></div>', 'tall'),
  row(use('ring', P) + '<div class="stack">Function Name<span class="box">healthDecay</span></div>', 'tall'),
  f(L, 'Time'), row(use('ring', R) + 'Looping<span class="check">✔</span>')], [e(), f(B, 'Return Value')]);
set(1350, 893, 88, 34, B, [e(), f(B, 'Health Timer')], [e(), o(B)]);

/* right edge */
vari(1782, 397.500, 90, R, 'Not on Top Platform?');
[['U', 500], ['I', 565], ['O', 629], ['P', 693], ['[', 757]].forEach(([k, y]) => {
  key(1790, y, k);
  set(1878, y + 8, 90, 36, T, [e(), o(T)], [E()]);
});
node('blue', 1774, 885, 180, 56, hd('widget', 'Create Player HUD Widget'),
  [e(), row(use('ring', V) + 'Class <span class="ghost">Player HUD▾ ← ⌕</span>'), o(O, 'Owning Player')], [e(), '<div class="row" style="padding-right:54px">Return Value</div>']);

document.getElementById('canvas').innerHTML = out.join('');
```
